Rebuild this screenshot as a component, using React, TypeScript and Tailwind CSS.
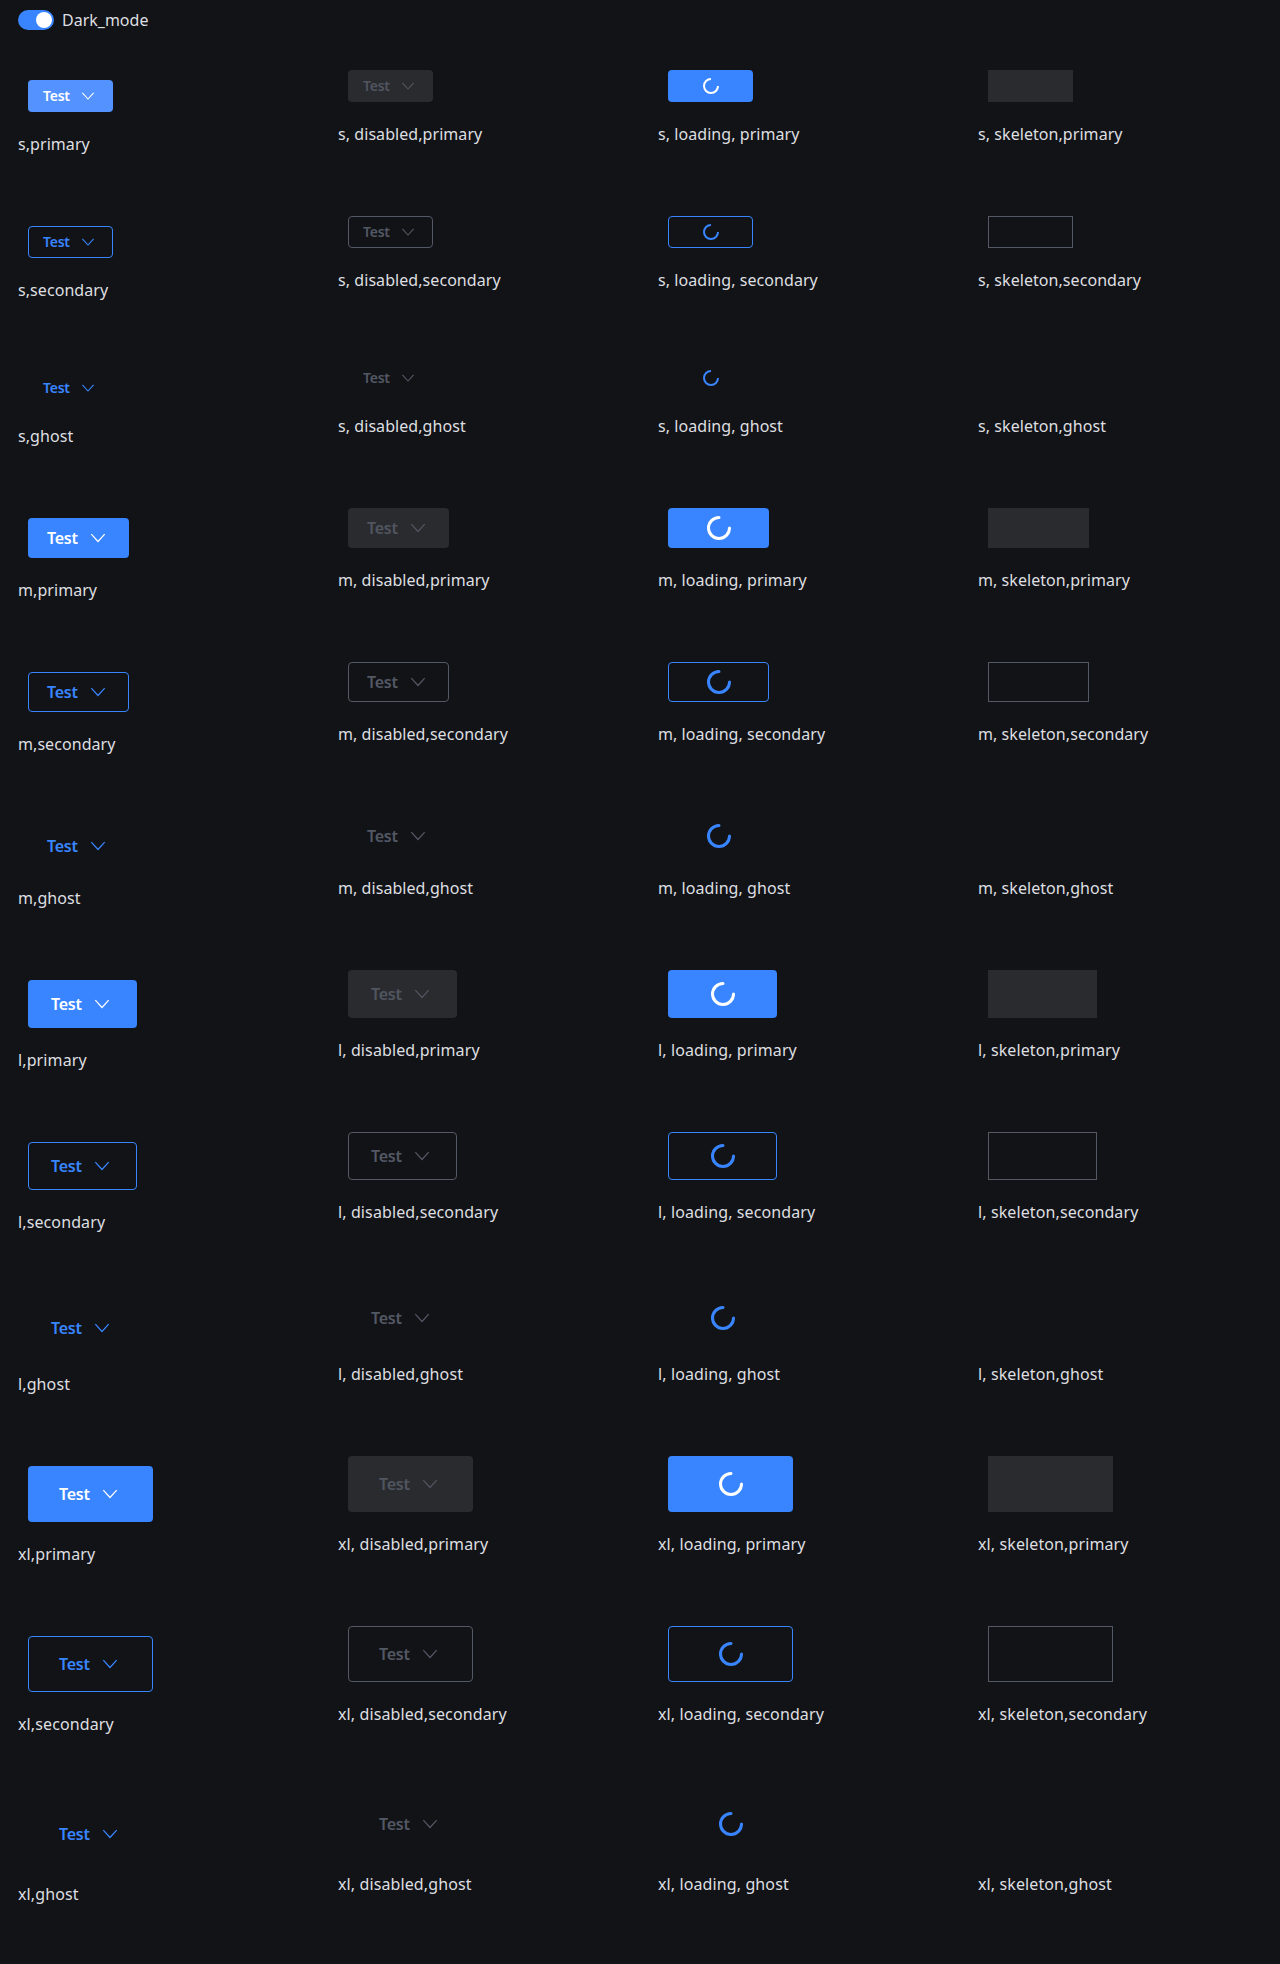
type Size = "s" | "m" | "l" | "xl";
type Variant = "primary" | "secondary" | "ghost";
type State = "normal" | "disabled" | "loading" | "skeleton";

const sizes: Size[] = ["s", "m", "l", "xl"];
const variants: Variant[] = ["primary", "secondary", "ghost"];
const states: State[] = ["normal", "disabled", "loading", "skeleton"];

const box: Record<Size, string> = {
  s: "h-8 w-[85px] pl-[15px] pr-[17px] text-sm",
  m: "h-10 w-[101px] pl-[19px] pr-[21px] text-base",
  l: "h-12 w-[109px] pl-[23px] pr-[25px] text-base",
  xl: "h-14 w-[125px] pl-[31px] pr-[33px] text-base",
};

const rowHeight: Record<Size, string> = {
  s: "h-[146px]",
  m: "h-[154px]",
  l: "h-[162px]",
  xl: "h-[170px]",
};

const active: Record<Variant, string> = {
  primary: "bg-[#3985ff] text-white",
  secondary: "outline-[#3985ff] text-[#3985ff]",
  ghost: "text-[#3985ff]",
};

const inactive: Record<Variant, string> = {
  primary: "bg-[#2a2b2f] text-[#505560]",
  secondary: "outline-[#535865] text-[#535865]",
  ghost: "text-[#535865]",
};

const labelPrefix: Record<State, string> = {
  normal: ",",
  disabled: ", disabled,",
  loading: ", loading, ",
  skeleton: ", skeleton,",
};

const labelSpacing: Record<Size, string> = {
  s: "tracking-[0.06px]",
  m: "tracking-[0.06px]",
  l: "tracking-[0.11px]",
  xl: "tracking-[0.11px]",
};

function Chevron({ small }: { small: boolean }) {
  return small ? (
    <svg className="size-4" viewBox="0 0 16 16" fill="none" stroke="currentColor" strokeWidth="1.1">
      <path d="M2.4 4.8 8 11l5.6-6.2" />
    </svg>
  ) : (
    <svg className="size-5" viewBox="0 0 20 20" fill="none" stroke="currentColor" strokeWidth="1.25">
      <path d="M3.3 6.1 10 13.5l6.7-7.4" />
    </svg>
  );
}

function Spinner({ small }: { small: boolean }) {
  return small ? (
    <svg className="size-4" viewBox="0 0 16 16" fill="none" stroke="currentColor" strokeWidth="2">
      <path d="M15 8a7 7 0 1 1-7-7" />
    </svg>
  ) : (
    <svg className="size-6" viewBox="0 0 24 24" fill="none" stroke="currentColor" strokeWidth="3" strokeLinecap="round">
      <path d="M22.5 12A10.5 10.5 0 1 1 12 1.5" />
    </svg>
  );
}

function TestButton({ size, variant, state, hovered }: { size: Size; variant: Variant; state: State; hovered: boolean }) {
  const small = size === "s";
  const outline = variant === "secondary" ? "outline-1 -outline-offset-1" : "";
  const tone = hovered
    ? "bg-[#5392ff] text-white"
    : state === "normal" || state === "loading"
      ? active[variant]
      : inactive[variant];

  if (state === "skeleton") {
    return <div className={`${box[size]} ${outline} ${tone}`} />;
  }
  if (state === "loading") {
    return (
      <button className={`${box[size]} ${outline} ${tone} flex items-center rounded-[4px]`}>
        <span className="flex grow justify-center pl-[3px]">
          <Spinner small={small} />
        </span>
      </button>
    );
  }
  return (
    <button
      className={`${box[size]} ${outline} ${tone} flex items-center justify-between rounded-[4px] font-semibold tracking-[-0.25px]`}
      disabled={state === "disabled"}
    >
      <span>Test</span>
      <Chevron small={small} />
    </button>
  );
}

export default function App() {
  return (
    <div className="h-[1964px] overflow-hidden bg-[#121316] font-['Noto_Sans',sans-serif] text-base text-[#dedfe1]">
      <div className="flex h-[60px] items-start gap-2 pt-[10px] pl-[18px]">
        <div className="flex h-5 w-9 justify-end rounded-full bg-[#3985ff] p-0.5">
          <div className="size-4 rounded-full bg-white" />
        </div>
        <span className="leading-5">Dark_mode</span>
      </div>
      {sizes.map((size) =>
        variants.map((variant) => (
          <div key={size + variant} className={`grid grid-cols-4 ${rowHeight[size]}`}>
            {states.map((state) => (
              <div key={state} className={`flex flex-col pl-[18px] ${state === "normal" ? "pt-5" : "pt-[10px]"}`}>
                <div className="pl-[10px]">
                  <TestButton
                    size={size}
                    variant={variant}
                    state={state}
                    hovered={state === "normal" && size === "s" && variant === "primary"}
                  />
                </div>
                <span className={`mt-5 leading-6 ${labelSpacing[size]}`}>
                  {size}
                  {labelPrefix[state]}
                  {variant}
                </span>
              </div>
            ))}
          </div>
        )),
      )}
    </div>
  );
}
